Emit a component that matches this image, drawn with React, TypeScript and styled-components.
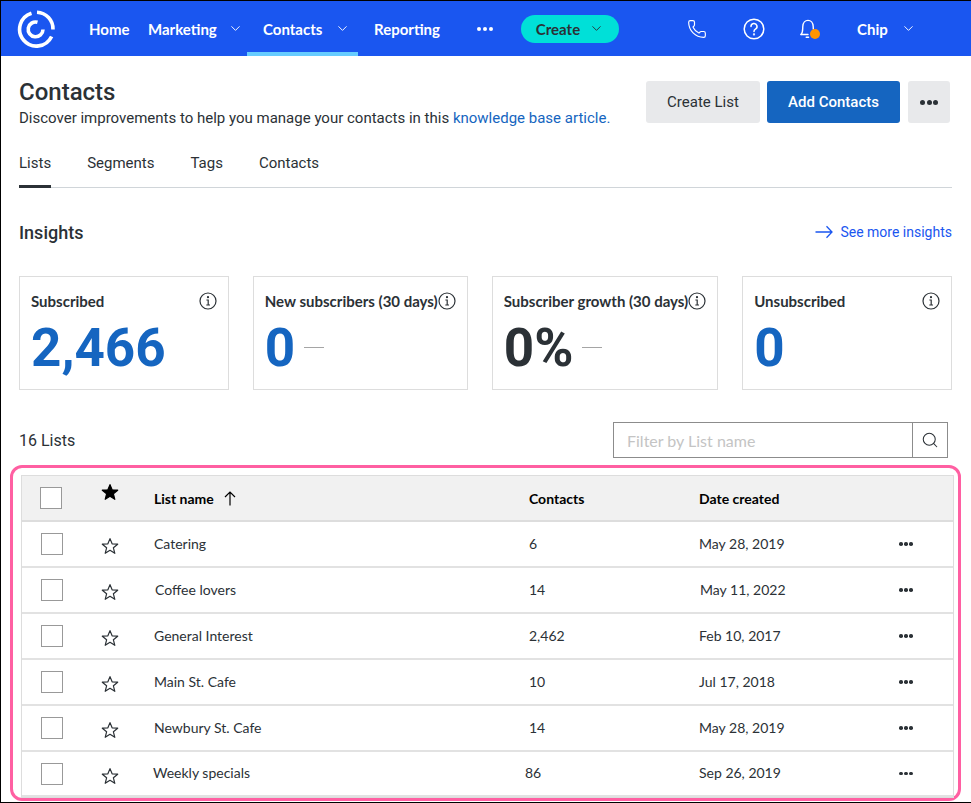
import React from 'react'
import styled, { createGlobalStyle } from 'styled-components'
import { ChevronDown, Phone, Search } from 'lucide-react'

const GlobalStyle = createGlobalStyle`
html, body {
  margin: 0;
  padding: 0;
  background: #fff;
}
* {
  box-sizing: border-box;
}
`

const rows = [
    { name: 'Catering', contacts: '6', date: 'May 28, 2019' },
    { name: 'Coffee lovers', contacts: '14', date: 'May 11, 2022', nameNudge: 1, dateNudge: 1 },
    { name: 'General Interest', contacts: '2,462', date: 'Feb 10, 2017' },
    { name: 'Main St. Cafe', contacts: '10', date: 'Jul 17, 2018' },
    { name: 'Newbury St. Cafe', contacts: '14', date: 'May 28, 2019' },
    { name: 'Weekly specials', contacts: '86', date: 'Sep 26, 2019', nameNudge: -1, contactsNudge: -4 },
]

const Logo = () => (
    <svg width="40" height="40" viewBox="0 0 40 40" fill="none" stroke="#fff" strokeWidth="3.6">
        <path d="M15.5 4.2 A16.8 16.8 0 1 0 35.6 27.5" />
        <path d="M21 3.2 A16.8 16.8 0 0 1 37 20.5" />
        <path d="M27 20.5 A7.4 7.4 0 1 1 21.5 13.2" />
    </svg>
)

const Dots = ({ size = 4, gap = 2, color = '#fff' }: { size?: number; gap?: number; color?: string }) => (
    <DotRow $gap={gap}>
        <Dot $size={size} $color={color} />
        <Dot $size={size} $color={color} />
        <Dot $size={size} $color={color} />
    </DotRow>
)

const Star = ({ filled }: { filled?: boolean }) => (
    <svg width="18" height="18" viewBox="0 0 18 18" fill={filled ? '#000' : 'none'} stroke={filled ? '#000' : '#2b3136'} strokeWidth="1.2" strokeLinejoin="round">
        <path d="M9 1.6 L11.1 6.8 L16.7 7.2 L12.4 10.8 L13.8 16.3 L9 13.3 L4.2 16.3 L5.6 10.8 L1.3 7.2 L6.9 6.8 Z" />
    </svg>
)

const Info = () => (
    <svg width="18" height="18" viewBox="0 0 18 18" fill="none" stroke="#2b3136" strokeWidth="1.2">
        <circle cx="9" cy="9" r="8" />
        <path d="M7.4 8 H9.2 V13 M7.3 13 H11" />
        <circle cx="9" cy="5.2" r="0.5" fill="#2b3136" />
    </svg>
)

const Help = () => (
    <svg width="22" height="22" viewBox="0 0 22 22" fill="none" stroke="#fff" strokeWidth="1.5" strokeLinecap="round">
        <circle cx="11" cy="11" r="9.8" />
        <path d="M8 8.6 A3 3 0 1 1 12.4 11.2 C11.4 11.8 11 12.3 11 13.4" />
        <circle cx="11" cy="16.4" r="0.4" fill="#fff" />
    </svg>
)

const Bell = () => (
    <svg width="20" height="22" viewBox="0 0 20 22" fill="none" stroke="#fff" strokeWidth="1.4" strokeLinecap="round" strokeLinejoin="round">
        <path d="M2 16.5 C4 14.5 3.6 12 3.8 8.5 C4 4.8 6.3 2.4 9 2.4 C11.7 2.4 14 4.8 14.2 8.5 L14.3 11" />
        <path d="M2 16.5 H9 M7.2 19.2 H9.6" />
    </svg>
)

const Arrow = ({ color }: { color: string }) => (
    <svg width="18" height="14" viewBox="0 0 18 14" fill="none" stroke={color} strokeWidth="1.3">
        <path d="M0.5 7 H17 M11.5 1.2 L17 7 L11.5 12.8" />
    </svg>
)

const UpArrow = () => (
    <svg width="12" height="15" viewBox="0 0 12 15" fill="none" stroke="#000" strokeWidth="1.2">
        <path d="M6 14.5 V1 M1 6 L6 1 L11 6" />
    </svg>
)

export default function App() {
    return (
        <Page>
            <GlobalStyle />
            <NavBar>
                <LogoBox><Logo /></LogoBox>
                <NavItem $w={71} $pad={16}>Home</NavItem>
                <NavItem $w={103} $pad={0}>
                    <NavLabel $w={80}>Marketing</NavLabel>
                    <ChevronDown size={15} strokeWidth={1.5} />
                </NavItem>
                <NavItem $w={111} $pad={16} $active>
                    <NavLabel $w={72}>Contacts</NavLabel>
                    <ChevronDown size={15} strokeWidth={1.5} />
                </NavItem>
                <NavItem $w={100} $pad={16}>Reporting</NavItem>
                <NavItem $w={53} $pad={0}><Dots /></NavItem>
                <CreateButton>
                    Create
                    <ChevronDown size={15} strokeWidth={1.5} />
                </CreateButton>
                <NavRight>
                    <IconSlot $w={56}><Phone size={20} strokeWidth={1.4} /></IconSlot>
                    <IconSlot $w={56}><Help /></IconSlot>
                    <IconSlot $w={58}>
                        <BellWrap>
                            <Bell />
                            <BellDot />
                        </BellWrap>
                    </IconSlot>
                    <UserName>Chip</UserName>
                    <ChevronDown size={15} strokeWidth={1.5} color="#fff" />
                </NavRight>
            </NavBar>

            <Content>
                <HeaderRow>
                    <div>
                        <Title>Contacts</Title>
                        <Subtitle>
                            Discover improvements to help you manage your contacts in this <BlueLink>knowledge base article.</BlueLink>
                        </Subtitle>
                    </div>
                    <HeaderActions>
                        <GreyButton>Create List</GreyButton>
                        <BlueButton>Add Contacts</BlueButton>
                        <MoreButton><Dots size={5} gap={1.5} color="#2b3136" /></MoreButton>
                    </HeaderActions>
                </HeaderRow>

                <Tabs>
                    <Tab $active>Lists</Tab>
                    <Tab>Segments</Tab>
                    <Tab>Tags</Tab>
                    <Tab>Contacts</Tab>
                </Tabs>

                <InsightsHead>
                    <SectionTitle>Insights</SectionTitle>
                    <MoreLink><Arrow color="#1a56f0" />See more insights</MoreLink>
                </InsightsHead>

                <Cards>
                    <Card>
                        <CardHead><CardTitle>Subscribed</CardTitle><Info /></CardHead>
                        <CardValue>2,466</CardValue>
                    </Card>
                    <Card>
                        <CardHead><CardTitle>New subscribers (30 days)</CardTitle><Info /></CardHead>
                        <CardValue>0<Dash /></CardValue>
                    </Card>
                    <Card>
                        <CardHead><CardTitle>Subscriber growth (30 days)</CardTitle><Info /></CardHead>
                        <CardValue $dark>0%<Dash /></CardValue>
                    </Card>
                    <Card>
                        <CardHead><CardTitle>Unsubscribed</CardTitle><Info /></CardHead>
                        <CardValue>0</CardValue>
                    </Card>
                </Cards>

                <ListBar>
                    <ListCount>16 Lists</ListCount>
                    <FilterBox>
                        <FilterInput placeholder="Filter by List name" />
                        <FilterButton><Search size={18} strokeWidth={1.4} color="#2b3136" /></FilterButton>
                    </FilterBox>
                </ListBar>
            </Content>

            <Highlight>
                <Table>
                    <HeadRow>
                        <CheckCell $nudge={-1}><CheckBox /></CheckCell>
                        <StarCell $up={6}><Star filled /></StarCell>
                        <HeadName>List name <UpArrow /></HeadName>
                        <HeadCell>Contacts</HeadCell>
                        <HeadCell>Date created</HeadCell>
                        <span />
                    </HeadRow>
                    {rows.map(r => (
                        <Row key={r.name}>
                            <CheckCell><CheckBox /></CheckCell>
                            <StarCell $up={-2}><Star /></StarCell>
                            <Cell $nudge={r.nameNudge}>{r.name}</Cell>
                            <Cell $nudge={r.contactsNudge}>{r.contacts}</Cell>
                            <Cell $nudge={r.dateNudge}>{r.date}</Cell>
                            <RowMenu><Dots size={3.5} gap={1.5} color="#2b3136" /></RowMenu>
                        </Row>
                    ))}
                </Table>
            </Highlight>
        </Page>
    )
}

const roboto = `Roboto, "Liberation Sans", sans-serif`
const geo = `Lato, "Noto Sans", sans-serif`

const Page = styled.div`
width: 971px;
height: 803px;
overflow: hidden;
background: #fff;
border-top: 1px solid #000;
border-left: 1px solid #000;
border-bottom: 1px solid #000;
color: #2b3136;
font-family: ${roboto};
`

const NavBar = styled.nav`
display: flex;
align-items: stretch;
height: 55px;
background: #1a56f0;
color: #fff;
font-family: ${geo};
font-size: 15px;
font-weight: 700;
`

const LogoBox = styled.div`
display: flex;
align-items: center;
width: 72px;
padding-left: 15px;
`

const NavItem = styled.div<{ $w: number; $pad: number; $active?: boolean }>`
position: relative;
display: flex;
align-items: center;
width: ${p => p.$w}px;
padding-left: ${p => p.$pad}px;
justify-content: ${p => (p.$pad ? 'flex-start' : 'center')};
border-bottom: 4px solid ${p => (p.$active ? '#66ccff' : 'transparent')};
padding-top: 4px;
`

const NavLabel = styled.span<{ $w: number }>`
display: inline-block;
width: ${p => p.$w}px;
`

const DotRow = styled.span<{ $gap: number }>`
display: inline-flex;
align-items: center;
gap: ${p => p.$gap}px;
`

const Dot = styled.i<{ $size: number; $color: string }>`
display: block;
width: ${p => p.$size}px;
height: ${p => p.$size}px;
border-radius: 50%;
background: ${p => p.$color};
`

const CreateButton = styled.button`
display: flex;
align-items: center;
justify-content: center;
gap: 9px;
align-self: center;
width: 98px;
height: 28px;
margin-left: 10px;
border: none;
border-radius: 14px;
background: #00e0d8;
color: #2b3136;
font-family: ${geo};
font-size: 15px;
font-weight: 700;
`

const NavRight = styled.div`
display: flex;
align-items: center;
margin-left: 68px;
`

const IconSlot = styled.div<{ $w: number }>`
display: flex;
align-items: center;
width: ${p => p.$w}px;
`

const BellWrap = styled.div`
position: relative;
display: flex;
`

const BellDot = styled.span`
position: absolute;
right: -1px;
bottom: 1px;
width: 10px;
height: 10px;
border-radius: 50%;
background: #ff9500;
`

const UserName = styled.span`
width: 44px;
`

const Content = styled.div`
padding: 0 19px 0 18px;
`

const HeaderRow = styled.div`
display: flex;
justify-content: space-between;
align-items: flex-start;
padding-top: 25px;
height: 92px;
`

const Title = styled.h1`
margin: 0;
font-size: 24px;
font-weight: 500;
line-height: 22px;
`

const Subtitle = styled.p`
margin: 6px 0 0;
font-size: 15px;
line-height: 18px;
`

const BlueLink = styled.a`
color: #1565c0;
`

const HeaderActions = styled.div`
display: flex;
gap: 7px;
margin-right: 2px;
`

const GreyButton = styled.button`
width: 114px;
height: 42px;
border: none;
border-radius: 3px;
background: #e8e9eb;
color: #2b3136;
font-family: ${roboto};
font-size: 15px;
`

const BlueButton = styled(GreyButton)`
width: 133px;
background: #1565c0;
color: #fff;
font-weight: 500;
`

const MoreButton = styled(GreyButton)`
display: flex;
align-items: center;
justify-content: center;
width: 42px;
margin-left: 1px;
`

const Tabs = styled.div`
display: flex;
gap: 36px;
height: 40px;
border-bottom: 1px solid #d0d5d9;
`

const Tab = styled.div<{ $active?: boolean }>`
height: 40px;
padding-top: 6px;
font-size: 15px;
line-height: 18px;
border-bottom: ${p => (p.$active ? '3px solid #2b3136' : 'none')};
`

const InsightsHead = styled.div`
display: flex;
justify-content: space-between;
align-items: center;
height: 88px;
`

const SectionTitle = styled.h2`
margin: 0;
font-size: 18px;
font-weight: 500;
`

const MoreLink = styled.a`
display: flex;
align-items: center;
gap: 7px;
color: #1a56f0;
font-size: 14px;
`

const Cards = styled.div`
display: grid;
grid-template-columns: repeat(4, 1fr);
gap: 24px;
width: 933px;
`

const Card = styled.div`
height: 114px;
padding: 14px 11px;
border: 1px solid #ddd;
`

const CardHead = styled.div`
display: flex;
justify-content: space-between;
align-items: center;
height: 20px;
font-family: ${geo};
font-size: 15px;
font-weight: 700;
`

const CardTitle = styled.span`
flex: 1;
overflow: hidden;
white-space: nowrap;
`

const CardValue = styled.div<{ $dark?: boolean }>`
display: flex;
align-items: center;
gap: 9px;
margin-top: 9px;
font-size: 53px;
line-height: 56px;
font-weight: 700;
color: ${p => (p.$dark ? '#2b3136' : '#1565c0')};
`

const Dash = styled.span`
width: 20px;
height: 1px;
background: #a5a5a5;
margin-top: -2px;
`

const ListBar = styled.div`
display: flex;
justify-content: space-between;
align-items: center;
height: 68px;
padding-top: 32px;
width: 929px;
`

const ListCount = styled.span`
font-size: 16px;
`

const FilterBox = styled.div`
display: flex;
width: 335px;
height: 36px;
border: 1px solid #8c8c8c;
`

const FilterInput = styled.input`
flex: 1;
min-width: 0;
border: none;
outline: none;
padding: 0 13px;
font-family: ${geo};
font-size: 16px;
&::placeholder {
  color: #c4c4c4;
}
`

const FilterButton = styled.div`
display: flex;
align-items: center;
justify-content: center;
width: 35px;
border-left: 1px solid #8c8c8c;
`

const Highlight = styled.div`
width: 951px;
height: 336px;
margin: 7px 0 0 9px;
padding: 7px 7px 0 8px;
border: 3px solid #ff5fa2;
border-radius: 12px;
`

const Table = styled.div`
width: 933px;
border: 1px solid #ddd;
font-family: ${geo};
font-size: 14px;
`

const columns = `grid-template-columns: 71px 61px 375px 170px 1fr 54px;`

const HeadRow = styled.div`
display: grid;
${columns}
align-items: center;
height: 46px;
background: #f1f1f1;
border-bottom: 2px solid #ddd;
font-weight: 700;
color: #000;
`

const Row = styled.div`
display: grid;
${columns}
align-items: center;
height: 46px;
border-bottom: 2px solid #e2e2e2;
color: #2b3136;
&:last-child {
  height: 45px;
}
`

const CheckCell = styled.div<{ $nudge?: number }>`
display: flex;
padding-left: ${p => 19 + (p.$nudge ?? 0)}px;
`

const CheckBox = styled.span`
display: block;
width: 22px;
height: 22px;
background: #fff;
border: 1px solid #999;
`

const StarCell = styled.div<{ $up: number }>`
display: flex;
padding-left: 8px;
transform: translateY(${p => -p.$up}px);
`

const Cell = styled.div<{ $nudge?: number }>`
white-space: nowrap;
margin-left: ${p => p.$nudge ?? 0}px;
margin-top: -2px;
`

const HeadCell = styled.div``

const HeadName = styled.div`
display: flex;
align-items: center;
gap: 10px;
`

const RowMenu = styled.div`
display: flex;
padding-left: 0;
`
